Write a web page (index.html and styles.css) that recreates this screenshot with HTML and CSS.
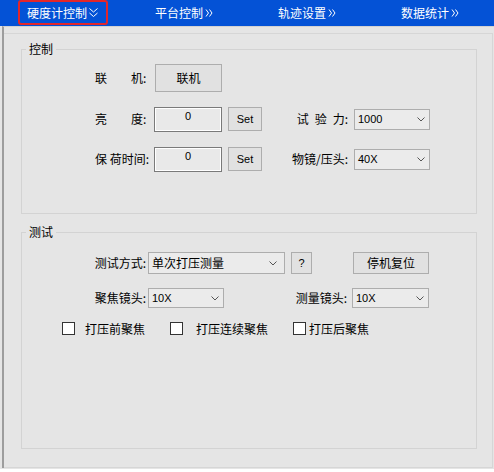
FILE: index.html
```html
<!DOCTYPE html>
<html lang="zh-CN">
<head>
<meta charset="utf-8">
<title>硬度计控制</title>
<link rel="stylesheet" href="styles.css">
</head>
<body>
<div class="app">
  <nav class="tabs">
    <div class="tab tab-active">硬度计控制<svg class="chev chev-down" width="11" height="11" viewBox="0 0 11 11"><path d="M1.5 1.5 L5.5 5 L9.5 1.5 M1.5 6 L5.5 9.5 L9.5 6" /></svg></div>
    <div class="tab">平台控制<svg class="chev chev-right" width="8" height="10" viewBox="0 0 8 10"><path d="M1 1.5 L3.5 5 L1 8.5 M4.5 1.5 L7 5 L4.5 8.5" /></svg></div>
    <div class="tab">轨迹设置<svg class="chev chev-right" width="8" height="10" viewBox="0 0 8 10"><path d="M1 1.5 L3.5 5 L1 8.5 M4.5 1.5 L7 5 L4.5 8.5" /></svg></div>
    <div class="tab">数据统计<svg class="chev chev-right" width="8" height="10" viewBox="0 0 8 10"><path d="M1 1.5 L3.5 5 L1 8.5 M4.5 1.5 L7 5 L4.5 8.5" /></svg></div>
  </nav>

  <div class="panel">
    <div class="panel-inner">
      <fieldset class="group group-control">
        <legend>控制</legend>
        <div class="control-grid">
          <span class="lbl row-start">联　　机:</span>
          <button class="btn btn-connect">联机</button>

          <span class="lbl row-start">亮　　度:</span>
          <input class="num" type="text" value="0">
          <button class="btn btn-set">Set</button>
          <span class="lbl lbl-right">试&ensp;验&ensp;力:</span>
          <div class="combo combo-sm"><span>1000</span><svg class="arrow" width="8" height="5" viewBox="0 0 8 5"><path d="M0.5 0.5 L4 4 L7.5 0.5" /></svg></div>

          <span class="lbl row-start">保 荷时间:</span>
          <input class="num" type="text" value="0">
          <button class="btn btn-set">Set</button>
          <span class="lbl lbl-right">物镜/压头:</span>
          <div class="combo combo-sm"><span>40X</span><svg class="arrow" width="8" height="5" viewBox="0 0 8 5"><path d="M0.5 0.5 L4 4 L7.5 0.5" /></svg></div>
        </div>
      </fieldset>

      <fieldset class="group group-test">
        <legend>测试</legend>
        <div class="test-body">
          <div class="row row-mode">
            <span class="lbl lbl-test">测试方式:</span>
            <div class="combo combo-mode"><span class="cjk">单次打压测量</span><svg class="arrow" width="8" height="5" viewBox="0 0 8 5"><path d="M0.5 0.5 L4 4 L7.5 0.5" /></svg></div>
            <button class="btn btn-help">?</button>
            <button class="btn btn-reset">停机复位</button>
          </div>
          <div class="row row-lens">
            <span class="lbl lbl-test">聚焦镜头:</span>
            <div class="combo combo-lens"><span>10X</span><svg class="arrow" width="8" height="5" viewBox="0 0 8 5"><path d="M0.5 0.5 L4 4 L7.5 0.5" /></svg></div>
            <span class="lbl lbl-measure">测量镜头:</span>
            <div class="combo combo-measure"><span>10X</span><svg class="arrow" width="8" height="5" viewBox="0 0 8 5"><path d="M0.5 0.5 L4 4 L7.5 0.5" /></svg></div>
          </div>
          <div class="row row-checks">
            <label class="check check-pre"><input type="checkbox"><span class="check-text">打压前聚焦</span></label>
            <label class="check check-cont"><input type="checkbox"><span class="check-text">打压连续聚焦</span></label>
            <label class="check check-post"><input type="checkbox"><span class="check-text">打压后聚焦</span></label>
          </div>
        </div>
      </fieldset>
    </div>
  </div>
</div>
</body>
</html>
```

FILE: styles.css
```css
* {
  box-sizing: border-box;
}

html, body {
  margin: 0;
  padding: 0;
}

body {
  width: 494px;
  height: 472px;
  background: #ffffff;
  font-family: "Noto Sans CJK SC", "Noto Sans", sans-serif;
  font-size: 12px;
  color: #000;
  overflow: hidden;
}

.app {
  height: 469px;
  background: #e5e5e5;
  display: flex;
  flex-direction: column;
}

/* top navigation bar */
.tabs {
  height: 26px;
  flex: none;
  background: #0452d6;
  display: flex;
  padding-left: 18px;
  overflow: hidden;
}

.tab {
  flex: none;
  width: 123px;
  height: 26px;
  display: flex;
  align-items: center;
  color: #fff;
  font-size: 12px;
  line-height: 1;
  white-space: nowrap;
}

.tab-active {
  width: 90px;
  height: 25px;
  margin-right: 47px;
  padding-left: 7px;
  border: 2px solid #e3262a;
  border-radius: 3px;
}

.chev {
  fill: none;
  stroke: #fff;
  stroke-width: 1;
  margin-left: 1px;
}

.chev-right {
  margin-left: 2px;
}

/* main panel */
.panel {
  flex: 1;
  display: flex;
  flex-direction: column;
  margin: 0 0 1px 2px;
  border-left: 2px solid #9d9d9d;
  border-top: 1px solid #d2d2d2;
}

.panel-inner {
  flex: 1;
  margin-top: 6px;
  margin-right: 1px;
  border-top: 1px solid #d6d6d6;
  border-right: 1px solid #d6d6d6;
  border-bottom: 1px solid #d6d6d6;
  padding-top: 8px;
}

.group {
  margin: 0 15px 0 17px;
  padding: 0;
  border: 1px solid #d3d3d3;
  min-width: 0;
}

.group legend {
  margin-left: 4px;
  padding: 0 3px;
  font-size: 12px;
  line-height: 14px;
  height: 14px;
}

.group-test {
  margin-top: 11px;
}

/* control section */
.control-grid {
  display: grid;
  grid-template-columns: 54px 67px 33px 81px 76px;
  grid-template-rows: 28px 26px 26px;
  column-gap: 6px;
  row-gap: 14px;
  align-items: center;
  margin-left: 73px;
  padding-top: 8px;
  height: 157px;
  align-content: start;
}

.row-start {
  grid-column: 1;
}

.lbl {
  white-space: nowrap;
  line-height: 14px;
}

.lbl-right {
  text-align: right;
}

.btn {
  font-family: "Noto Sans CJK SC", sans-serif;
  font-size: 12px;
  color: #000;
  background: #e1e1e1;
  border: 1px solid #adadad;
  padding: 0;
  line-height: 1;
}

.btn-connect {
  width: 67px;
  height: 28px;
}

.btn-set {
  width: 34px;
  height: 24px;
  font-family: "Liberation Sans", Arial, sans-serif;
  font-size: 11px;
}

.num {
  width: 68px;
  height: 25px;
  margin-left: -1px;
  border: 1px solid #7a7a7a;
  box-shadow: inset 1px 1px 0 #ffffff, inset -1px -1px 0 #ffffff;
  background: #e9e9e9;
  text-align: center;
  font-family: "Liberation Sans", Arial, sans-serif;
  font-size: 11px;
  padding: 0 0 7px;
  color: #000;
  outline: none;
}

.combo {
  display: flex;
  align-items: center;
  justify-content: space-between;
  height: 21px;
  background: #ebebeb;
  border: 1px solid #adadad;
  padding: 0 4px 0 3px;
  font-family: "Liberation Sans", Arial, sans-serif;
  font-size: 11px;
  line-height: 1;
}

.combo .cjk {
  font-family: "Noto Sans CJK SC", sans-serif;
  font-size: 12px;
}

.arrow {
  fill: none;
  stroke: #555;
  stroke-width: 1;
}

/* test section */
.test-body {
  height: 209px;
  padding-top: 13px;
}

.row {
  display: flex;
  align-items: center;
}

.row-mode {
  height: 22px;
}

.lbl-test {
  width: 58px;
  margin-left: 66px;
  text-align: right;
}

.combo-mode {
  width: 137px;
  height: 22px;
  margin-left: 2px;
  padding-right: 7px;
}

.btn-help {
  width: 21px;
  height: 22px;
  margin-left: 6px;
  font-family: "Liberation Sans", Arial, sans-serif;
  font-size: 11px;
}

.btn-reset {
  width: 76px;
  height: 22px;
  margin-left: 41px;
}

.row-lens {
  height: 20px;
  margin-top: 14px;
}

.combo-lens {
  width: 76px;
  height: 20px;
  margin-left: 2px;
}

.lbl-measure {
  width: 123px;
  text-align: right;
}

.combo-measure {
  width: 77px;
  height: 20px;
  margin-left: 5px;
}

.row-checks {
  height: 14px;
  margin-top: 13px;
}

.check {
  display: flex;
  align-items: center;
}

.check input {
  appearance: none;
  -webkit-appearance: none;
  width: 13px;
  height: 13px;
  margin: 0;
  background: #ffffff;
  border: 1px solid #333333;
}

.check-pre {
  margin-left: 40px;
}

.check-pre .check-text {
  margin-left: 10px;
}

.check-cont {
  margin-left: 25px;
}

.check-cont .check-text {
  margin-left: 13px;
}

.check-post {
  margin-left: 25px;
}

.check-post .check-text {
  margin-left: 3px;
}
```
